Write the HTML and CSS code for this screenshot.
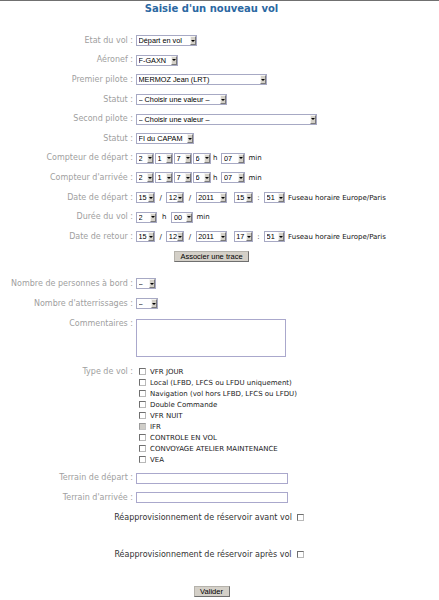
FILE: index.html
```html
<!DOCTYPE html>
<html lang="fr">
<head>
<meta charset="utf-8">
<title>Saisie d'un nouveau vol</title>
<link rel="stylesheet" href="styles.css">
</head>
<body>
<div class="page">
  <h1 class="title">Saisie d'un nouveau vol</h1>
  <form class="form">
    <div class="row">
      <label class="lbl">Etat du vol :</label>
      <div class="field"><span class="sel w61"><select><option>Départ en vol</option></select><span class="arr"></span></span></div>
    </div>
    <div class="row">
      <label class="lbl">Aéronef :</label>
      <div class="field"><span class="sel w42"><select><option>F-GAXN</option></select><span class="arr"></span></span></div>
    </div>
    <div class="row">
      <label class="lbl">Premier pilote :</label>
      <div class="field"><span class="sel w131"><select><option>MERMOZ Jean (LRT)</option></select><span class="arr"></span></span></div>
    </div>
    <div class="row">
      <label class="lbl">Statut :</label>
      <div class="field"><span class="sel w91"><select><option>– Choisir une valeur –</option></select><span class="arr"></span></span></div>
    </div>
    <div class="row">
      <label class="lbl">Second pilote :</label>
      <div class="field"><span class="sel w181"><select><option>– Choisir une valeur –</option></select><span class="arr"></span></span></div>
    </div>
    <div class="row">
      <label class="lbl">Statut :</label>
      <div class="field"><span class="sel w58"><select><option>FI du CAPAM</option></select><span class="arr"></span></span></div>
    </div>
    <div class="row">
      <label class="lbl">Compteur de départ :</label>
      <div class="field">
        <span class="sel w18 tight"><select><option>2</option></select><span class="arr"></span></span>
        <span class="sel w18 tight"><select><option>1</option></select><span class="arr"></span></span>
        <span class="sel w18 tight"><select><option>7</option></select><span class="arr"></span></span>
        <span class="sel w18"><select><option>6</option></select><span class="arr"></span></span>
        <span class="txt sep-h">h</span>
        <span class="sel w24"><select><option>07</option></select><span class="arr"></span></span>
        <span class="txt sep-l">min</span>
      </div>
    </div>
    <div class="row">
      <label class="lbl">Compteur d'arrivée :</label>
      <div class="field">
        <span class="sel w18 tight"><select><option>2</option></select><span class="arr"></span></span>
        <span class="sel w18 tight"><select><option>1</option></select><span class="arr"></span></span>
        <span class="sel w18 tight"><select><option>7</option></select><span class="arr"></span></span>
        <span class="sel w18"><select><option>6</option></select><span class="arr"></span></span>
        <span class="txt sep-h">h</span>
        <span class="sel w24"><select><option>07</option></select><span class="arr"></span></span>
        <span class="txt sep-l">min</span>
      </div>
    </div>
    <div class="row">
      <label class="lbl">Date de départ :</label>
      <div class="field">
        <span class="sel w19"><select><option>15</option></select><span class="arr"></span></span>
        <span class="txt sep-s">/</span>
        <span class="sel w18"><select><option>12</option></select><span class="arr"></span></span>
        <span class="txt sep-s">/</span>
        <span class="sel w31 wide-r"><select><option>2011</option></select><span class="arr"></span></span>
        <span class="sel w19"><select><option>15</option></select><span class="arr"></span></span>
        <span class="txt sep-s">:</span>
        <span class="sel w21"><select><option>51</option></select><span class="arr"></span></span>
        <span class="txt sep-l">Fuseau horaire Europe/Paris</span>
      </div>
    </div>
    <div class="row">
      <label class="lbl">Durée du vol :</label>
      <div class="field">
        <span class="sel w21"><select><option>2</option></select><span class="arr"></span></span>
        <span class="txt sep-d">h</span>
        <span class="sel w22"><select><option>00</option></select><span class="arr"></span></span>
        <span class="txt sep-l">min</span>
      </div>
    </div>
    <div class="row">
      <label class="lbl">Date de retour :</label>
      <div class="field">
        <span class="sel w19"><select><option>15</option></select><span class="arr"></span></span>
        <span class="txt sep-s">/</span>
        <span class="sel w18"><select><option>12</option></select><span class="arr"></span></span>
        <span class="txt sep-s">/</span>
        <span class="sel w31 wide-r"><select><option>2011</option></select><span class="arr"></span></span>
        <span class="sel w19"><select><option>17</option></select><span class="arr"></span></span>
        <span class="txt sep-s">:</span>
        <span class="sel w21"><select><option>51</option></select><span class="arr"></span></span>
        <span class="txt sep-l">Fuseau horaire Europe/Paris</span>
      </div>
    </div>
    <div class="row-center">
      <button type="button" class="btn btn-trace">Associer une trace</button>
    </div>

    <div class="row gap-top">
      <label class="lbl">Nombre de personnes à bord :</label>
      <div class="field"><span class="sel w20"><select><option>–</option></select><span class="arr"></span></span></div>
    </div>
    <div class="row">
      <label class="lbl">Nombre d'atterrissages :</label>
      <div class="field"><span class="sel w22"><select><option>–</option></select><span class="arr"></span></span></div>
    </div>
    <div class="row-top comment-row">
      <label class="lbl lbl-top">Commentaires :</label>
      <div class="field"><textarea class="area"></textarea></div>
    </div>
    <div class="row-top type-row">
      <label class="lbl lbl-type">Type de vol :</label>
      <ul class="checks">
        <li class="check"><input type="checkbox" class="cb"><span>VFR JOUR</span></li>
        <li class="check"><input type="checkbox" class="cb"><span>Local (LFBD, LFCS ou LFDU uniquement)</span></li>
        <li class="check"><input type="checkbox" class="cb"><span>Navigation (vol hors LFBD, LFCS ou LFDU)</span></li>
        <li class="check"><input type="checkbox" class="cb"><span>Double Commande</span></li>
        <li class="check"><input type="checkbox" class="cb"><span>VFR NUIT</span></li>
        <li class="check"><input type="checkbox" class="cb" disabled><span>IFR</span></li>
        <li class="check"><input type="checkbox" class="cb"><span>CONTROLE EN VOL</span></li>
        <li class="check"><input type="checkbox" class="cb"><span>CONVOYAGE ATELIER MAINTENANCE</span></li>
        <li class="check"><input type="checkbox" class="cb"><span>VEA</span></li>
      </ul>
    </div>
    <div class="row terrain-row">
      <label class="lbl">Terrain de départ :</label>
      <div class="field"><input type="text" class="inp"></div>
    </div>
    <div class="row">
      <label class="lbl">Terrain d'arrivée :</label>
      <div class="field"><input type="text" class="inp"></div>
    </div>
    <div class="refuel">
      <span>Réapprovisionnement de réservoir avant vol</span><input type="checkbox" class="cb">
    </div>
    <div class="refuel refuel-after">
      <span>Réapprovisionnement de réservoir après vol</span><input type="checkbox" class="cb">
    </div>
    <div class="row-center submit-row">
      <button type="submit" class="btn btn-valider">Valider</button>
    </div>
  </form>
</div>
</body>
</html>
```

FILE: styles.css
```css
html, body {
  margin: 0;
  padding: 0;
  background: #fff;
}
body {
  border-top: 1px solid #707070;
  font-family: "DejaVu Sans", Verdana, sans-serif;
}
.page {
  width: 423px;
}
.title {
  margin: 2px 0 0;
  font-size: 10px;
  line-height: 12px;
  font-weight: bold;
  color: #2b68a2;
  text-align: center;
}
.form {
  margin: 16px 0 0;
  padding: 0;
}
.row {
  display: grid;
  grid-template-columns: 133px auto;
  column-gap: 3px;
  align-items: center;
  height: 19.6px;
}
.row-top {
  display: grid;
  grid-template-columns: 133px auto;
  column-gap: 3px;
  align-items: start;
}
.lbl {
  font-size: 8px;
  line-height: 10px;
  color: #a0a0a0;
  text-align: right;
  white-space: nowrap;
}
.field {
  display: flex;
  align-items: center;
}
.txt {
  font-size: 7px;
  line-height: 10px;
  color: #111;
  white-space: nowrap;
}
.sep-h { margin: 0 4px 0 2px; }
.sep-l { margin-left: 3px; }
.sep-s { margin: 0 4.5px; }
.sep-d { margin: 0 5px 0 5px; }
.wide-r { margin-right: 7px; }
.tight { margin-right: 1px; }

/* select look */
.sel {
  display: inline-flex;
  box-sizing: border-box;
  height: 11px;
  border: 1px solid #a7a9c4;
  background: #fff;
  padding: 0;
}
.sel select {
  -webkit-appearance: none;
  appearance: none;
  flex: 1;
  min-width: 0;
  height: 9px;
  border: 0;
  margin: 0;
  padding: 0 0 0 1.5px;
  background: transparent;
  font-family: "Liberation Sans", Arial, sans-serif;
  font-size: 7.3px;
  line-height: 9px;
  color: #000;
  outline: none;
  text-overflow: clip;
}
.arr {
  box-sizing: border-box;
  flex: none;
  width: 6px;
  height: 9px;
  background: #d4d0c8;
  border: 1px solid;
  border-color: #f4f3f0 #7a7a7a #7a7a7a #f4f3f0;
  display: flex;
  align-items: center;
  justify-content: center;
}
.arr::after {
  content: "";
  width: 0;
  height: 0;
  border-left: 2px solid transparent;
  border-right: 2px solid transparent;
  border-top: 2px solid #000;
}
.w18 { width: 18px; }
.w19 { width: 19px; }
.w20 { width: 20px; }
.w21 { width: 21px; }
.w22 { width: 22px; }
.w24 { width: 24px; }
.w31 { width: 31px; }
.w42 { width: 42px; }
.w58 { width: 58px; }
.w61 { width: 61px; }
.w91 { width: 91px; }
.w131 { width: 131px; }
.w181 { width: 181px; }

/* buttons */
.row-center {
  display: flex;
  justify-content: center;
  align-items: center;
  height: 19.6px;
}
.btn {
  box-sizing: border-box;
  height: 11px;
  margin: 0;
  padding: 0 4px;
  background: #d4d0c8;
  border: 1px solid;
  border-color: #b5b2ab #6f6f6f #6f6f6f #b5b2ab;
  font-family: "Liberation Sans", Arial, sans-serif;
  font-size: 7.5px;
  line-height: 9px;
  color: #000;
}
.btn-trace { width: 75px; }
.btn-valider { width: 36px; }

.gap-top { margin-top: 8px; }

/* textarea */
.comment-row { margin-top: 6px; }
.area {
  box-sizing: border-box;
  width: 150px;
  height: 38px;
  margin: 0;
  padding: 0;
  border: 1px solid #aaa8cc;
  background: #fff;
  resize: none;
  display: block;
}

/* checkboxes */
.type-row { margin-top: 9px; }
.lbl-type { line-height: 11px; }
.checks {
  list-style: none;
  margin: 0;
  padding: 0;
}
.check {
  display: flex;
  align-items: center;
  height: 11px;
  font-size: 7px;
  color: #222;
  white-space: nowrap;
}
.cb {
  -webkit-appearance: none;
  appearance: none;
  box-sizing: border-box;
  width: 7px;
  height: 7px;
  margin: 0;
  border: 1px solid;
  border-color: #6f6f6f #b9b9b9 #b9b9b9 #6f6f6f;
  background: #fff;
}
.cb:disabled {
  background: #cfcdc8;
  border-color: #9a9a9a #c4c4c4 #c4c4c4 #9a9a9a;
}
.check .cb {
  margin: 0 4px 0 3px;
}

/* text inputs */
.terrain-row { margin-top: 3px; }
.inp {
  box-sizing: border-box;
  width: 152px;
  height: 11px;
  margin: 0;
  padding: 0;
  border: 1px solid #aaa8cc;
  background: #fff;
}

/* refuel rows */
.refuel {
  display: flex;
  justify-content: center;
  align-items: center;
  gap: 5px;
  height: 19.6px;
  padding-right: 5px;
  font-size: 8px;
  color: #333;
  white-space: nowrap;
}
.refuel-after { margin-top: 18px; }
.submit-row { margin-top: 21px; height: 11px; }
```
